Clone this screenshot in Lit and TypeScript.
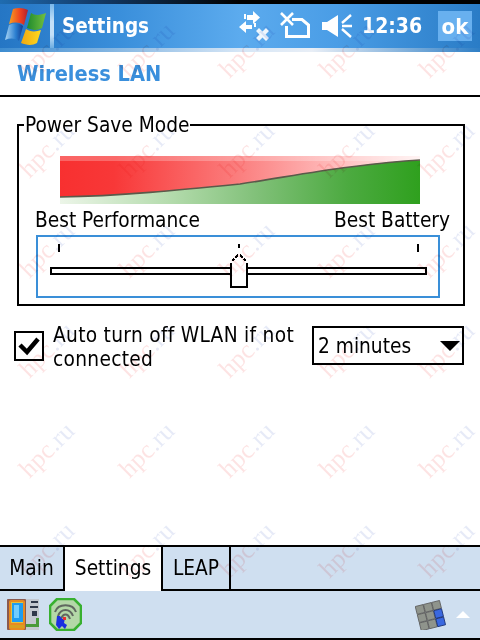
import { LitElement, html, css, svg } from "lit";
import { customElement } from "lit/decorators.js";

const COLS = [47, 147, 247, 347, 447];
const ROWS = [50, 150, 250, 350, 450, 550];

@customElement("app-root")
export class AppRoot extends LitElement {
  static styles = css`
    :host {
      display: flex;
      flex-direction: column;
      position: relative;
      width: 480px;
      height: 640px;
      overflow: hidden;
      background: #fff;
      color: #000;
      font-family: "DejaVu Sans Condensed", "DejaVu Sans", sans-serif;
      font-size: 20.7px;
    }
    svg { display: block; flex: none; }
    .topline {
      height: 4px;
      background: linear-gradient(90deg, #1f6cb0 0%, #143f70 18%, #000 50%, #000 100%);
    }
    .title {
      height: 44px;
      display: flex;
      align-items: center;
      background: linear-gradient(90deg, #2576c4 0%, #3a8fdb 25%, #5cabee 50%, #4a9de6 70%, #2a7cc6 100%);
      color: #fff;
    }
    .flagcell { width: 50px; height: 44px; display: flex; align-items: center; padding-left: 5px; box-sizing: border-box; }
    .sep { width: 4px; height: 44px; background: linear-gradient(180deg, #7ab8ea, #c4e0f8 40%, #c4e0f8 70%, #6eaee2); }
    .apptitle { font-weight: bold; font-size: 20.5px; margin-left: 8px; flex: 1; }
    .tray { display: flex; align-items: center; }
    .gap9 { width: 9px; }
    .gap11 { width: 11px; }
    .clock { font-weight: bold; font-size: 21px; margin-left: 10px; width: 71px; }
    .ok {
      width: 34px; height: 30px; margin: 0 8px 0 5px;
      background: #68b0ef;
      font-weight: bold; font-size: 22px;
      display: flex; align-items: center; justify-content: center;
    }
    .strip { height: 4px; background: linear-gradient(90deg, #3d8cd0 0%, #d6e6f6 50%, #e8eef6 65%, #2f7fc6 100%); }
    .pagehead {
      height: 43px;
      padding-left: 17px;
      display: flex;
      align-items: center;
      border-bottom: 2px solid #000;
      box-sizing: content-box;
      color: #3a8fdc;
      font-weight: bold;
      font-size: 21.6px;
    }
    .body { flex: 1; display: flex; flex-direction: column; padding: 27px 15px 0 14px; }
    .group {
      margin-left: 3px;
      border: 2px solid #000;
      height: 178px;
      box-sizing: content-box;
      display: flex;
      flex-direction: column;
      align-items: flex-start;
    }
    .legend { margin: -13px 0 0 5px; padding: 0 1px 0 1px; background: #fff; line-height: 24px; height: 24px; }
    .grad { margin: 19px 0 0 41px; }
    .scale { display: flex; justify-content: space-between; width: 415px; margin: 3px 0 0 16px; line-height: 26px; height: 27px; }
    .slider { margin: 1px 0 0 17px; width: 400px; height: 59px; border: 2px solid #3a8fd8; box-sizing: content-box; }
    .auto { display: flex; margin-top: 20px; align-items: flex-start; }
    .check { width: 26px; height: 26px; border: 2px solid #000; margin-top: 5px; flex: none; display: flex; align-items: center; justify-content: center; }
    .autotext { margin-left: 9px; width: 259px; line-height: 24px; margin-top: -3px; letter-spacing: 0.3px; }
    .select {
      width: 148px; height: 35px; border: 2px solid #000; margin-left: 0;
      box-sizing: content-box;
      display: flex; align-items: center; justify-content: space-between;
      padding: 0;
      text-indent: 4px;
    }
    .arrow { width: 0; height: 0; border: 10px solid transparent; border-top-color: #000; border-bottom: 0; margin-right: 2px; }
    .tabs {
      height: 42px;
      display: flex;
      background: #cfdff0;
      border-top: 2px solid #000;
      border-bottom: 2px solid #000;
    }
    .tab { display: flex; align-items: center; justify-content: center; border-right: 2px solid #000; box-sizing: border-box; height: 42px; }
    .tab.main { width: 65px; }
    .tab.set { width: 98px; background: #fff; height: 44px; margin-bottom: -2px; padding-bottom: 2px; }
    .tab.leap { width: 68px; }
    .bar {
      height: 49px;
      box-sizing: border-box;
      background: #cfdff0;
      border-bottom: 2px solid #000;
      display: flex;
      align-items: center;
      padding: 0 10px 0 6px;
      gap: 10px;
    }
    .spacer { flex: 1; }
    .kb { margin-right: -1px; }
    .up { width: 0; height: 0; border: 7px solid transparent; border-bottom-color: #fff; border-top: 0; margin: 0; }
    .wm { position: absolute; inset: 0; pointer-events: none; mix-blend-mode: multiply; }
    .mark {
      position: absolute;
      width: 66px;
      margin: -16px 0 0 -33px;
      text-align: center;
      white-space: nowrap;
      font-family: "Liberation Serif", serif;
      font-size: 26px;
      line-height: 32px;
      transform: rotate(-45deg);
      color: transparent;
      background: linear-gradient(90deg, #fde3e3 58%, #e6eaf7 62%);
      -webkit-background-clip: text;
      background-clip: text;
    }
  `;

  private flag() {
    return svg`<svg width="42" height="40" viewBox="0 0 42 40">
      <defs>
        <linearGradient id="fr" x1="0" x2="1"><stop offset="0" stop-color="#f8a020"/><stop offset=".6" stop-color="#ee4020"/><stop offset="1" stop-color="#b02030"/></linearGradient>
        <linearGradient id="fg" x1="0" x2="1"><stop offset="0" stop-color="#1f8a2c"/><stop offset="1" stop-color="#72c040"/></linearGradient>
        <linearGradient id="fb" x1="0" x2="1"><stop offset="0" stop-color="#a8d4f4"/><stop offset=".6" stop-color="#2a7ed0"/><stop offset="1" stop-color="#123c90"/></linearGradient>
        <linearGradient id="fy" x1="0" x2="1"><stop offset="0" stop-color="#f0a810"/><stop offset="1" stop-color="#ffd820"/></linearGradient>
      </defs>
      <path d="M8 3C13 1 19 2 23 4L19 19C14 16 9 16 4 18Z" fill="url(#fr)"/>
      <path d="M26 7C30 10 36 9 41 7L37 22C32 25 27 24 22 22Z" fill="url(#fg)"/>
      <path d="M4 19C9 17 14 17 18 20L14 35C10 32 5 32 0 34Z" fill="url(#fb)"/>
      <path d="M21 23C25 26 31 26 36 24L32 37C27 40 21 39 16 37Z" fill="url(#fy)"/>
    </svg>`;
  }

  private netIcon() {
    return svg`<svg width="32" height="34" viewBox="0 0 32 34" fill="#fff">
      <path d="M8 6h6V2l7 6.5-7 6.5v-4H8z"/>
      <path d="M13 16H7v-4L0 18l7 6v-4h6z"/>
      <rect x="5" y="5" width="2" height="5"/><rect x="15" y="14" width="2" height="4"/>
      <path d="M17 22l3-3 3.5 3.5L27 19l3 3-3.5 3.5L30 29l-3 3-3.5-3.5L20 32l-3-3 3.5-3.5z" opacity=".9"/>
    </svg>`;
  }

  private battIcon() {
    return svg`<svg width="31" height="30" viewBox="0 0 31 30" fill="none" stroke="#fff" stroke-width="3">
      <path d="M12 8.5H22L28.5 14V25.5H6.5V15"/>
      <path d="M1 2l12 12M13 2L1 14" stroke-width="2.6"/>
    </svg>`;
  }

  private volIcon() {
    return svg`<svg width="30" height="26" viewBox="0 0 30 26" fill="#fff">
      <path d="M0 9h5L16 2v22L5 17H0z"/>
      <path d="M20 10l9-8M20 13h10M20 16l9 8" stroke="#fff" stroke-width="2.4" fill="none"/>
    </svg>`;
  }

  private gradient() {
    const curve = "M0 41 C60 40 120 34 180 28 C220 22 250 16 290 11 C320 7 340 5 360 4";
    return svg`<svg width="360" height="48" viewBox="0 0 360 48">
      <defs>
        <linearGradient id="rg" x1="0" x2="1"><stop offset="0" stop-color="#f83030"/><stop offset=".15" stop-color="#f83838"/><stop offset=".5" stop-color="#fb7f7f"/><stop offset=".8" stop-color="#ffc4c4"/><stop offset="1" stop-color="#fff0f0"/></linearGradient>
        <linearGradient id="gg" x1="0" x2="1"><stop offset="0" stop-color="#ecf5e8"/><stop offset=".3" stop-color="#b5dcae"/><stop offset=".55" stop-color="#80c078"/><stop offset=".8" stop-color="#4caa40"/><stop offset="1" stop-color="#2fa01e"/></linearGradient>
      </defs>
      <rect width="360" height="48" fill="url(#gg)"/>
      <path d="${curve} V0 H0 Z" fill="url(#rg)"/>
      <rect width="360" height="5" fill="#fff" opacity=".25"/>
      <path d="${curve}" fill="none" stroke="#5a5a4a" stroke-width="1.6"/>
    </svg>`;
  }

  private slider() {
    return svg`<svg width="400" height="59" viewBox="0 0 400 59" fill="none" stroke="#000" stroke-width="2" shape-rendering="crispEdges">
      <path d="M21 7v8M201 7v4M380 7v8"/>
      <rect x="13" y="31" width="375" height="6" fill="#fff"/>
      <path d="M193 51V25l8-9 8 9v26z" fill="#fff" stroke="none"/>
      <path d="M193 51V26M209 51V26M192 50H210"/>
      <path d="M194 24l2-2M197 21l2-2M199 18h1M202 18h1M203 19l2 2M206 22l2 2"/>
    </svg>`;
  }

  private phoneIcon() {
    return svg`<svg width="33" height="33" viewBox="0 0 33 33">
      <rect x="1" y="1" width="32" height="31" fill="#c4c8d0"/>
      <rect x="1" y="1" width="19" height="31" rx="1" fill="#8a5a50"/>
      <rect x="3" y="2" width="16" height="30" rx="2" fill="#e88a20"/>
      <rect x="5" y="4" width="12" height="21" fill="#e0c040"/>
      <rect x="6" y="5" width="11" height="19" fill="#1f9cf0"/>
      <rect x="8" y="7" width="5" height="13" fill="#70ccff"/>
      <rect x="4" y="27" width="14" height="3" fill="#d8a020"/>
      <rect x="25" y="3" width="7" height="2" fill="#30384a"/>
      <rect x="24" y="8" width="8" height="2" fill="#30384a"/>
      <rect x="26" y="13" width="5" height="5" fill="#30384a"/>
      <path d="M20 26h10v-6h3v9H20z" fill="#4a9a3a"/>
    </svg>`;
  }

  private wifiIcon() {
    return svg`<svg width="33" height="33" viewBox="0 0 33 33">
      <path d="M8 1H25L32 8V25L25 32H8L1 25V8Z" fill="#b4d8a8" stroke="#38b030" stroke-width="2.6"/>
      <path d="M6 14C9 5 24 5 27 14M9 18C12 10 21 10 24 18M12 21C14 15 19 15 21 21" fill="none" stroke="#606860" stroke-width="2"/>
      <path d="M8 18h3l2 3 3-1-1 5 3 2-2 4-3-3-3 3-3-4z" fill="#1a30e0"/>
      <rect x="14" y="19" width="3" height="3" fill="#e83030"/>
    </svg>`;
  }

  private keyboardIcon() {
    const keys = [];
    for (let r = 0; r < 3; r++)
      for (let c = 0; c < 3; c++) {
        const blue = c === 2 && r > 0;
        keys.push(svg`<rect x="${c * 8.5}" y="${r * 8.5}" width="8" height="8" fill="${blue ? "#3a68e0" : "#8f948c"}" stroke="${blue ? "#1a3070" : "#5c5c5c"}" stroke-width=".8"/>`);
      }
    return svg`<svg class="kb" width="32" height="30" viewBox="0 0 32 30"><g transform="translate(3 3) rotate(-14 13 13)">${keys}</g></svg>`;
  }

  render() {
    return html`
      <div class="topline"></div>
      <div class="title">
        <div class="flagcell">${this.flag()}</div>
        <div class="sep"></div>
        <div class="apptitle">Settings</div>
        <div class="tray">
          ${this.netIcon()}
          <span class="gap9"></span>
          ${this.battIcon()}
          <span class="gap11"></span>
          ${this.volIcon()}
          <div class="clock">12:36</div>
          <div class="ok">ok</div>
        </div>
      </div>
      <div class="strip"></div>
      <div class="pagehead">Wireless LAN</div>
      <div class="body">
        <div class="group">
          <div class="legend">Power Save Mode</div>
          <div class="grad">${this.gradient()}</div>
          <div class="scale"><span>Best Performance</span><span>Best Battery</span></div>
          <div class="slider">${this.slider()}</div>
        </div>
        <div class="auto">
          <div class="check">
            <svg width="22" height="20" viewBox="0 0 22 20"><path d="M2 9l7 7L20 3" fill="none" stroke="#000" stroke-width="4.5"/></svg>
          </div>
          <div class="autotext">Auto turn off WLAN if not connected</div>
          <div class="select"><span>2 minutes</span><div class="arrow"></div></div>
        </div>
      </div>
      <div class="tabs">
        <div class="tab main">Main</div>
        <div class="tab set">Settings</div>
        <div class="tab leap">LEAP</div>
      </div>
      <div class="bar">
        ${this.phoneIcon()}
        ${this.wifiIcon()}
        <div class="spacer"></div>
        ${this.keyboardIcon()}
        <div class="up"></div>
      </div>
      <div class="wm">
        ${ROWS.map((y) =>
          COLS.map((x) => html`<div class="mark" style="left:${x}px;top:${y}px">hpc.ru</div>`)
        )}
      </div>
    `;
  }
}
